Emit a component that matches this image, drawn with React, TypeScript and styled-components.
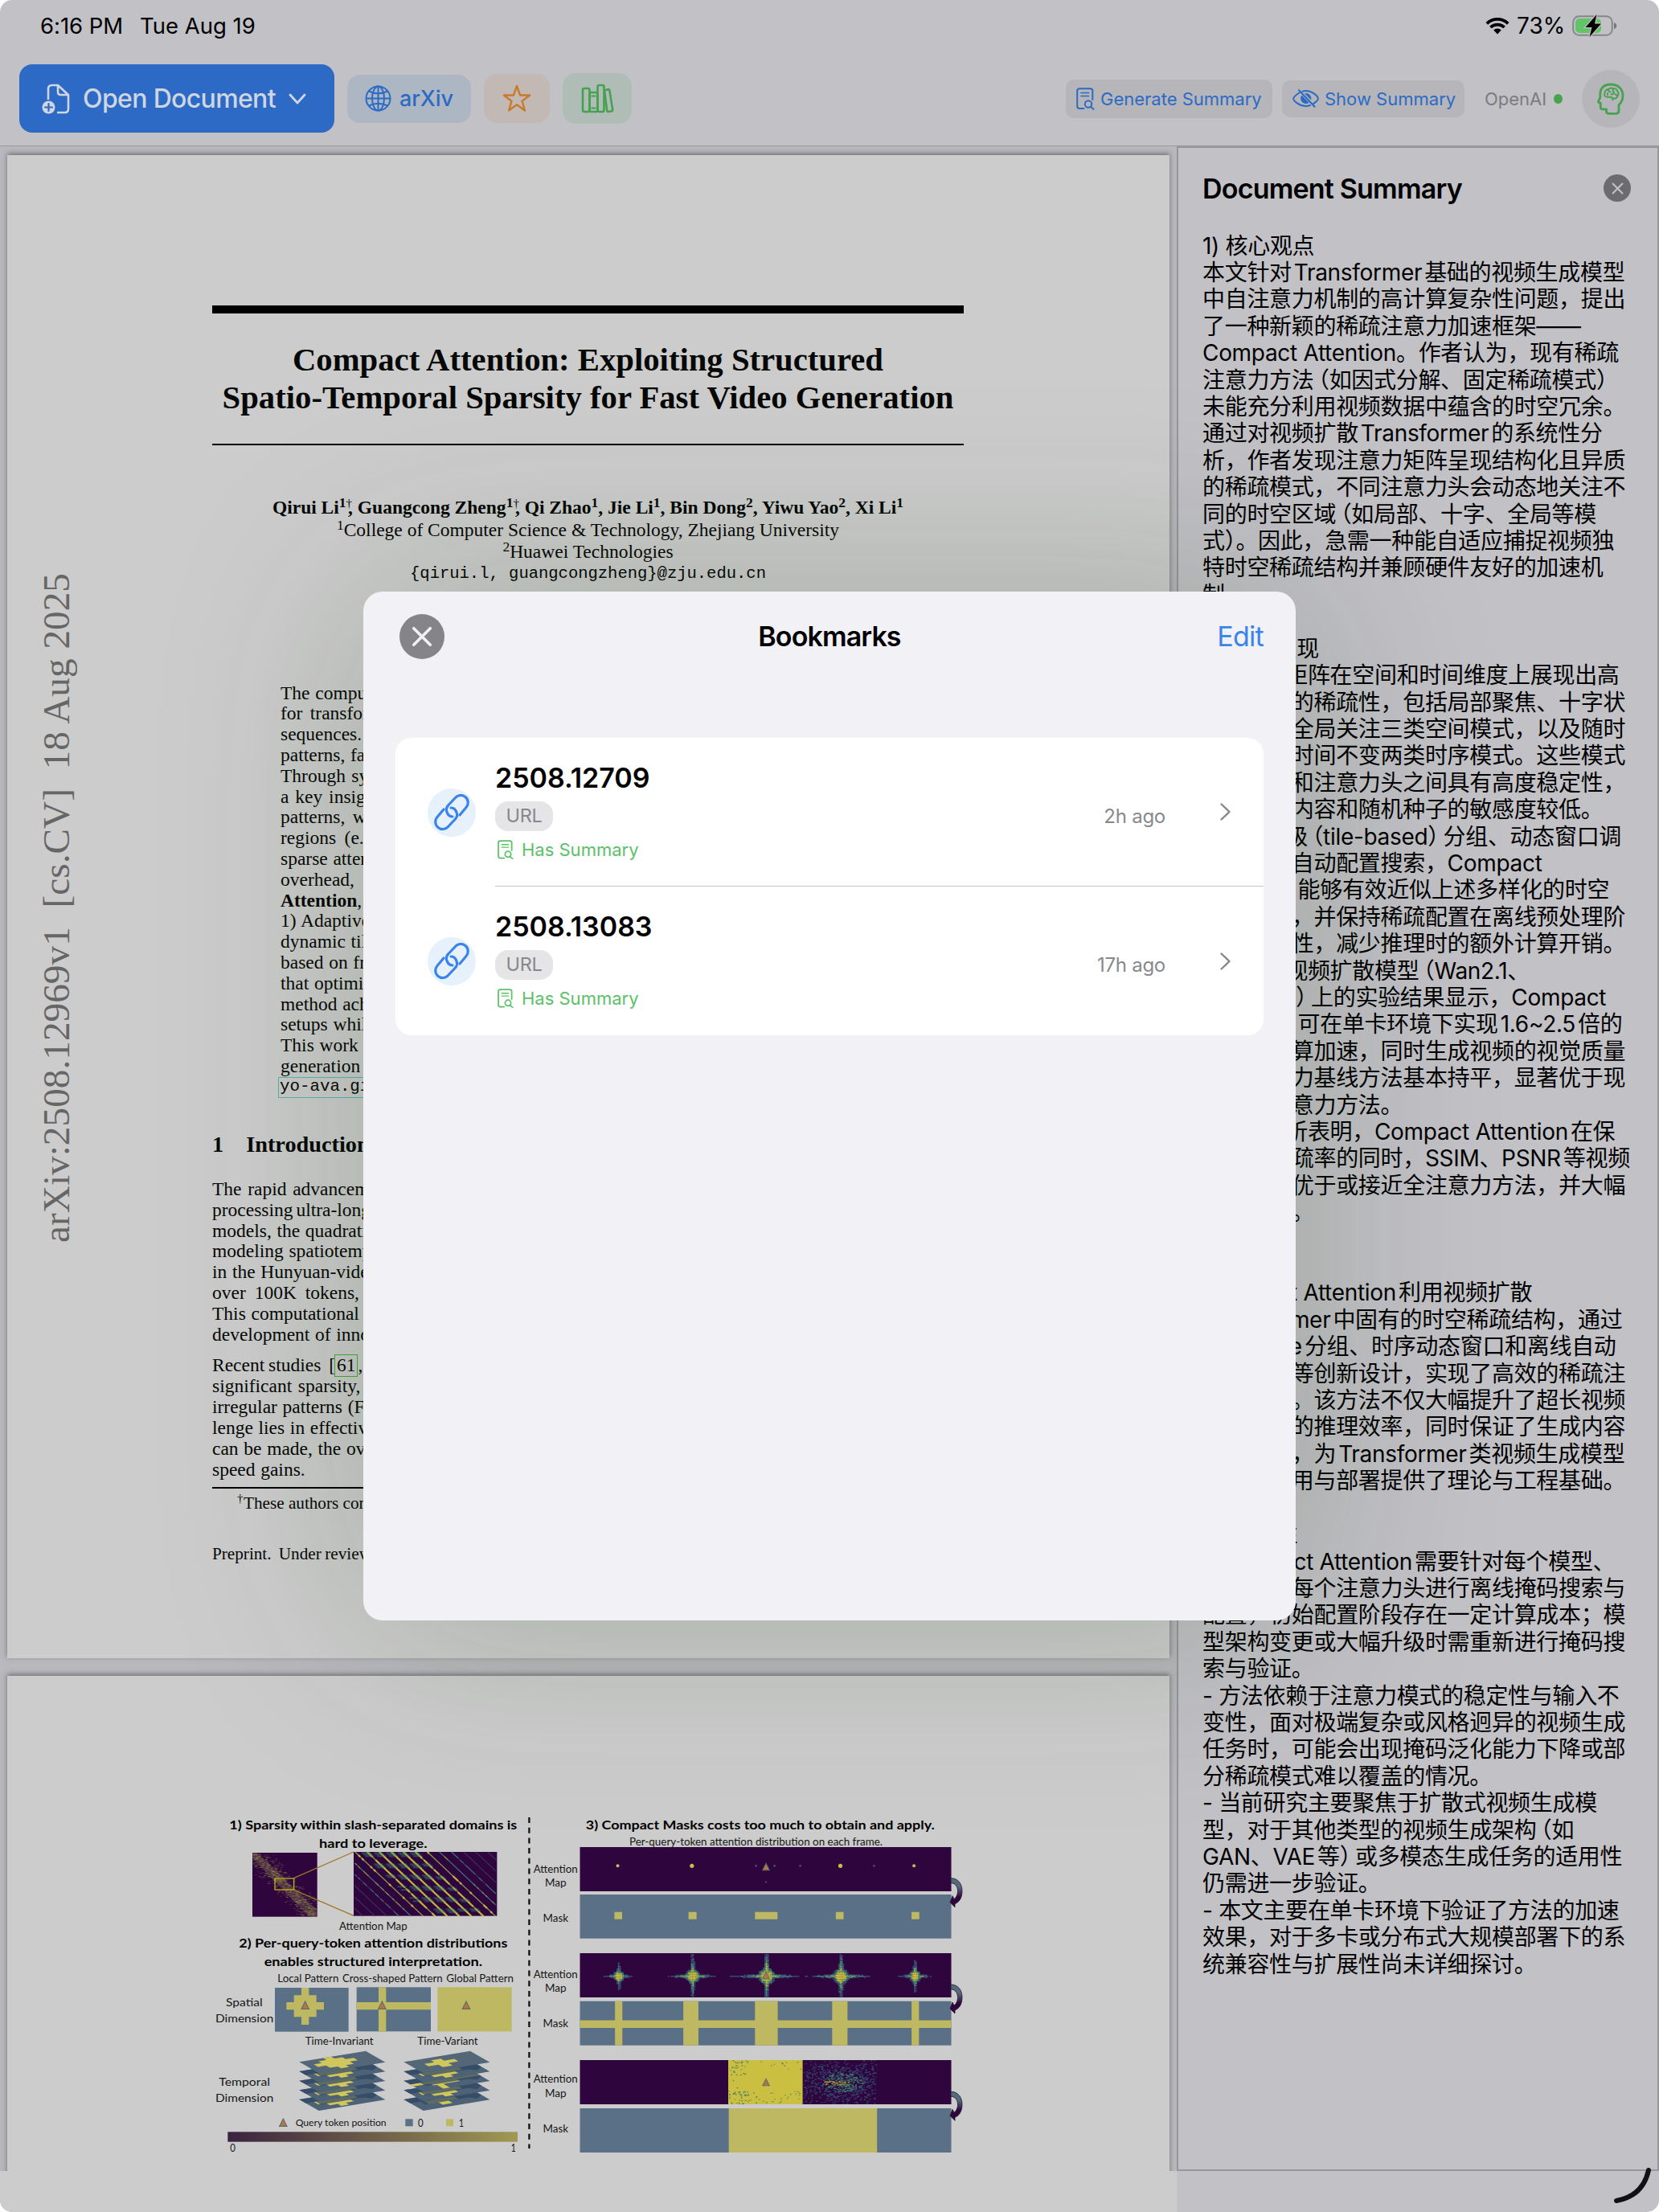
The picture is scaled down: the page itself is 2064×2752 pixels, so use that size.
import React from "react";
import styled, { createGlobalStyle } from "styled-components";

const sans = `Inter, "Noto Sans CJK SC", sans-serif`;
const serif = `"Liberation Serif", serif`;
const mono = `"Liberation Mono", monospace`;

const Global = createGlobalStyle`
  html, body { margin: 0; padding: 0; background: #fff; }
  * { box-sizing: border-box; }
`;

const Screen = styled.div`
  position: relative;
  width: 2064px;
  height: 2752px;
  display: flex;
  flex-direction: column;
  overflow: hidden;
  border-radius: 15px;
  background: #c2c1c6;
  font-family: ${sans};
  color: #000;
`;

/* ---------- status bar ---------- */

const StatusBar = styled.div`
  display: flex;
  align-items: center;
  height: 64px;
  padding: 0 52px 0 50px;
  font-size: 27.5px;
  line-height: 34px;
  white-space: pre;
`;
const StatusTime = styled.span<{ $w: number; $ls: number }>`
  width: ${(p) => p.$w}px;
  letter-spacing: ${(p) => p.$ls}px;
`;
const Spacer = styled.div`
  flex: 1;
`;
const Percent = styled.span`
  width: 78px;
  padding-left: 9px;
  font-size: 28px;
`;

/* ---------- toolbar ---------- */

const Toolbar = styled.div`
  display: flex;
  align-items: center;
  height: 118px;
  padding: 0 24px;
  border-bottom: 1px solid #98979c;
`;
const ToolGroup = styled.div<{ $gap: number }>`
  display: flex;
  align-items: center;
  gap: ${(p) => p.$gap}px;
`;
const PrimaryButton = styled.button`
  display: flex;
  align-items: center;
  width: 392px;
  height: 85px;
  padding: 0 0 0 28px;
  border: 0;
  border-radius: 16px;
  background: #2d6ac6;
  color: #cfd6e2;
  font: 500 32px/40px ${sans};
  letter-spacing: -0.65px;
  white-space: nowrap;
`;
const PrimaryLabel = styled.span`
  width: 271px;
  padding-left: 16px;
  text-align: left;
`;
const TintButton = styled.button<{ $w: number; $h: number; $bg: string }>`
  display: flex;
  align-items: center;
  justify-content: center;
  gap: 10px;
  width: ${(p) => p.$w}px;
  height: ${(p) => p.$h}px;
  padding: 0;
  border: 0;
  border-radius: 16px;
  background: ${(p) => p.$bg};
  color: #2c6bc5;
  font: 500 27px/34px ${sans};
`;
const SmallButton = styled.button<{ $w: number; $h: number }>`
  display: flex;
  align-items: center;
  gap: 7px;
  width: ${(p) => p.$w}px;
  height: ${(p) => p.$h}px;
  padding: 0 0 0 13px;
  border: 0;
  border-radius: 10px;
  background: #b5b5ba;
  color: #2c6bc5;
  font: 400 22px/28px ${sans};
  white-space: nowrap;
`;
const Provider = styled.div`
  display: flex;
  align-items: center;
  gap: 9px;
  width: 97px;
  margin-left: 13px;
  color: #7c7b80;
  font-size: 22px;
  line-height: 28px;
`;
const Dot = styled.i`
  width: 12px;
  height: 12px;
  border-radius: 50%;
  background: #48a24f;
`;
const Avatar = styled.div`
  display: flex;
  align-items: center;
  justify-content: center;
  width: 72px;
  height: 72px;
  margin-left: 12px;
  border-radius: 50%;
  background: #b5b5ba;
`;

/* ---------- body ---------- */

const Body = styled.div`
  display: flex;
  height: 2519px;
`;
const Viewer = styled.div`
  display: flex;
  flex-direction: column;
  gap: 22px;
  width: 1464px;
  padding: 11px 9px 0;
  overflow: hidden;
  background: #b9b8bd;
`;
const Page = styled.div`
  position: relative;
  flex: none;
  width: 1446px;
  height: 1870px;
  background: #ccc;
  box-shadow: 0 -2px 6px rgba(40, 40, 48, 0.5);
  font-family: ${serif};
`;
const Footer = styled.div`
  display: flex;
  flex: 1;
`;
const FooterLeft = styled.div`
  width: 1464px;
  background: #ccc;
`;

/* ---------- paper ---------- */

const Paper = styled.div`
  display: flex;
  flex-direction: column;
  width: 935px;
  margin-left: 255px;
  padding-top: 187px;
  color: #060806;
  white-space: pre;
`;
const Rule = styled.div<{ $h: number; $mt: number }>`
  height: ${(p) => p.$h}px;
  margin-top: ${(p) => p.$mt}px;
  background: #000;
`;
const PaperTitle = styled.div`
  margin-top: 33.5px;
  font-size: 40.7px;
  font-weight: 700;
  line-height: 47px;
  text-align: center;
`;
const AuthorBlock = styled.div`
  margin-top: 64.3px;
  font-size: 23.5px;
  line-height: 27.3px;
  text-align: center;
`;
const AuthorLine = styled.div<{ $bold?: boolean }>`
  height: 27.3px;
  font-weight: ${(p) => (p.$bold ? 700 : 400)};
`;
const Email = styled.div`
  height: 26.1px;
  font: 20.5px/28px ${mono};
`;
const Sup = styled.span`
  position: relative;
  top: -8px;
  font-size: 17.5px;
  line-height: 0;
`;
const Dagger = styled.span<{ $flush?: boolean }>`
  position: relative;
  top: -8px;
  margin-right: ${(p) => (p.$flush ? 0.5 : -5)}px;
  font-size: 15px;
  font-weight: 400;
  line-height: 0;
`;
const Paragraph = styled.div<{ $mt: number; $indent?: number; $lh?: number }>`
  margin-top: ${(p) => p.$mt}px;
  padding-left: ${(p) => p.$indent || 0}px;
  font-size: 23.5px;
  line-height: ${(p) => p.$lh || 25.85}px;
`;
const Line = styled.div<{ $ws?: number }>`
  height: 1lh;
  word-spacing: ${(p) => p.$ws ?? 0.8}px;
`;
const Url = styled.span`
  display: inline-block;
  height: 26px;
  margin: 0 0 0 -3px;
  padding: 0 1px;
  border: 1px solid #58b4ae;
  font: 20.8px/22px ${mono};
  vertical-align: top;
`;
const Cite = styled.span`
  display: inline-block;
  height: 28px;
  margin: -1px 0 0 -1px;
  padding: 0 2px;
  border: 1.5px solid #45ad35;
  line-height: 25px;
  vertical-align: top;
`;
const Heading = styled.div`
  display: flex;
  gap: 28px;
  margin-top: 41.7px;
  font-size: 28.3px;
  font-weight: 700;
  line-height: 34px;
`;
const Small = styled.div<{ $mt: number; $indent?: number; $ws?: number }>`
  margin-top: ${(p) => p.$mt}px;
  padding-left: ${(p) => p.$indent || 0}px;
  font-size: 21.2px;
  line-height: 24px;
  word-spacing: ${(p) => p.$ws || 0}px;
`;
const Stamp = styled.div`
  position: absolute;
  left: 32px;
  top: 520px;
  height: 833px;
  width: 58px;
  color: #666;
  font-size: 47.2px;
  letter-spacing: 0.05px;
  line-height: 58px;
  writing-mode: vertical-rl;
  transform: rotate(180deg);
  white-space: pre;
`;
const FigureSvg = styled.svg`
  display: block;
  margin-left: 231px;
`;
const FigureWrap = styled.div`
  padding-top: 145px;
`;

/* ---------- summary ---------- */

const Panel = styled.div`
  width: 600px;
  padding: 33px 0 0 30px;
  border: 2px solid #97969b;
  background: #c2c1c6;
`;
const PanelHead = styled.div`
  display: flex;
  align-items: center;
  justify-content: space-between;
  height: 34px;
  padding-right: 33px;
  font-size: 34px;
  font-weight: 600;
  letter-spacing: -0.8px;
`;
const CloseDot = styled.div<{ $d: number; $bg: string; $ml?: number }>`
  display: flex;
  align-items: center;
  justify-content: center;
  width: ${(p) => p.$d}px;
  height: ${(p) => p.$d}px;
  margin-left: ${(p) => p.$ml || 0}px;
  border-radius: 50%;
  background: ${(p) => p.$bg};
`;
const SummaryText = styled.div`
  margin-top: 38.6px;
  font-size: 28px;
  letter-spacing: -0.31px;
  line-height: 33.42px;
  white-space: pre;
  text-spacing-trim: space-all;
`;
const SummaryLine = styled.div`
  height: 33.42px;
`;
const Gap = styled.span`
  padding-left: 3px;
`;
const Paren = styled.span<{ $l?: number; $r?: number }>`
  padding-left: ${(p) => p.$l || 0}px;
  padding-right: ${(p) => p.$r || 0}px;
  font-family: "Noto Sans CJK SC", sans-serif;
  font-feature-settings: "halt";
  line-height: 0;
`;

/* ---------- modal ---------- */

const Modal = styled.div`
  position: absolute;
  left: 452px;
  top: 736px;
  width: 1160px;
  height: 1280px;
  padding: 28px 40px 0;
  border-radius: 24px;
  background: #f1f1f6;
  box-shadow: 0 0 270px rgba(20, 50, 10, 0.21);
`;
const ModalHead = styled.div`
  display: grid;
  grid-template-columns: 1fr auto 1fr;
  align-items: center;
  height: 56px;
`;
const ModalTitle = styled.div`
  padding-bottom: 2px;
  font-size: 34px;
  font-weight: 600;
  letter-spacing: -0.9px;
`;
const EditLink = styled.div`
  justify-self: end;
  padding-bottom: 2px;
  color: #3b83ec;
  font-size: 34px;
  letter-spacing: -0.7px;
`;
const Card = styled.div`
  margin-top: 98px;
  border-radius: 20px;
  background: #fff;
`;
const Row = styled.div`
  display: flex;
  align-items: center;
  height: 185px;
  padding-left: 40px;
`;
const LinkBadge = styled.div`
  display: flex;
  align-items: center;
  justify-content: center;
  width: 60px;
  height: 60px;
  border-radius: 50%;
  background: #e6f1fc;
`;
const RowMain = styled.div<{ $line: boolean }>`
  display: flex;
  flex: 1;
  align-items: center;
  height: 185px;
  margin-left: 24px;
  border-bottom: ${(p) => (p.$line ? "1px solid #c4c4c7" : "0")};
`;
const RowInfo = styled.div`
  flex: 1;
  padding-bottom: 1.5px;
`;
const RowTitle = styled.div`
  height: 40px;
  font-size: 34px;
  font-weight: 600;
  line-height: 40px;
  letter-spacing: -0.02px;
`;
const Pill = styled.div`
  width: 72px;
  height: 37px;
  margin-top: 9px;
  border-radius: 16px;
  background: #e5e5e8;
  color: #88888c;
  font-size: 23.5px;
  line-height: 36px;
  text-align: center;
  letter-spacing: -0.3px;
`;
const HasSummary = styled.div`
  display: flex;
  align-items: center;
  gap: 10px;
  height: 28px;
  margin-top: 9px;
  padding-left: 3px;
  color: #5cc168;
  font-size: 22px;
`;
const Ago = styled.div`
  width: 120px;
  margin-right: 68px;
  padding-top: 10px;
  color: #88888c;
  font-size: 24px;
  text-align: right;
  letter-spacing: -0.25px;
`;
const RowChevron = styled.svg`
  margin-right: 41px;
`;
const Corner = styled.svg`
  position: absolute;
  right: 6px;
  bottom: 6px;
`;

/* ---------- icons ---------- */

const DocPlus = () => (
  <svg width="35" height="38" viewBox="0 0 35 38" fill="none" stroke="#cfd6e2" strokeWidth="2.6" strokeLinejoin="round">
    <path d="M8 20V6.500Q8 2 12.500 2H20L33 14V31.500Q33 36 28.500 36H19M20 2V10.500Q20 14 23.500 14H33" />
    <circle cx="8.500" cy="29.500" r="8" fill="#cfd6e2" stroke="none" />
    <path d="M8.500 25v9M4 29.500h9" stroke="#2d6ac6" strokeWidth="2.200" strokeLinecap="round" />
  </svg>
);
const ChevronDown = () => (
  <svg width="24" height="16" viewBox="0 0 24 16" fill="none" stroke="#cfd6e2" strokeWidth="2.8" strokeLinecap="round" strokeLinejoin="round">
    <path d="M3 3l9 10 9-10" />
  </svg>
);
const Globe = () => (
  <svg width="33" height="33" viewBox="0 0 33 33" fill="none" stroke="#2c6bc5" strokeWidth="2">
    <circle cx="16.500" cy="16.500" r="15" />
    <ellipse cx="16.500" cy="16.500" rx="7.500" ry="15" />
    <path d="M16.500 1.500v30M1.500 16.500h30M5 7.500q11.500 5.500 23 0M5 25.500q11.500-5.500 23 0" />
  </svg>
);
const Star = () => (
  <svg width="36" height="35" viewBox="0 0 36 35" fill="none" stroke="#c87b2c" strokeWidth="2.4" strokeLinejoin="round">
    <path d="M18 2l4.100 11.500h12L24.500 20.700 28 32.500 18 25.300 8 32.500l3.500-11.800L1.900 13.500h12z" />
  </svg>
);
const Books = () => (
  <svg width="41" height="37" viewBox="0 0 41 37" fill="none" stroke="#47a150" strokeWidth="2.600" strokeLinejoin="round">
    <rect x="2" y="6" width="8.500" height="29" rx="2" />
    <rect x="10.500" y="11" width="10" height="24" rx="2" />
    <rect x="20.500" y="2" width="8" height="33" rx="2" />
    <path d="M29 8.500l4.500-1.300q1.500-.3 1.800 1.200l3.900 24q.2 1.500-1.200 1.900l-4 .7q-1.500.2-1.800-1.300z" />
    <path d="M12.500 15.500h6M12.500 30.500h6" strokeWidth="2" />
  </svg>
);
const DocSearch = ({ w, color }: { w: number; color: string }) => (
  <svg width={w} height={(w * 28) / 23} viewBox="0 0 23 28" fill="none" stroke={color} strokeWidth="2" strokeLinecap="round" strokeLinejoin="round">
    <path d="M9.500 26H4Q1.200 26 1.200 23V4Q1.200 1.200 4 1.200H17.500Q20.300 1.200 20.300 4V15" />
    <path d="M6 6.500h9.500M6 10.500h9.500" strokeWidth="1.700" />
    <circle cx="15" cy="20.500" r="4.200" />
    <path d="M18 23.800l3.500 3" />
  </svg>
);
const EyeSlash = () => (
  <svg width="33" height="23" viewBox="0 0 33 23" fill="none" stroke="#2c6bc5" strokeWidth="2" strokeLinecap="round">
    <path d="M8.500 4.500C4.500 7 1.200 10 1.200 11.700 1.200 14.500 8.500 21 16.500 21q3 0 5.500-1M12.500 2.700Q14.500 2 16.500 2c8 0 15.300 6.500 15.300 9.700 0 1.500-2.600 4.300-6.300 6.600" />
    <path d="M11.500 7.500a6.500 6.500 0 0 0 9 9.200zM15 5.300a6.500 6.500 0 0 1 8 8.200z" fill="#2c6bc5" stroke="none" />
    <path d="M8 1.200l19.500 20.600" />
  </svg>
);
const Brain = () => (
  <svg width="34" height="40" viewBox="0 0 34 40" fill="none" stroke="#47a150" strokeWidth="2.800" strokeLinejoin="round" strokeLinecap="round">
    <path d="M16.500 2C8.500 2 3.800 7 3.800 14v4.500L1.600 23q-.4 1.400 1 1.800l1.700.5v5q0 2.500 2.500 2.500h4.700v2.500q0 3 3.500 3h8.500q3.500 0 3.500-3.500V27.500Q32 23 32 16C32 7.500 26 2 16.500 2z" />
    <path d="M9.500 12.500q-1.500 5 3.500 5.200h3.500q3 .3 3 3.500M9.500 12.500q.5-4 4.500-4.500 2.500-2.500 6-.8 4-.5 5.200 3 2.500 3 .5 6-1 3.500-4.800 3.300M14 8q-.3 3 2.500 3.500M20 7.200q-1 3 1 4.300-.5 3-3.500 3M25.500 16q-2-.5-3-2M13 13v2" strokeWidth="1.900" />
  </svg>
);
const Wifi = () => (
  <svg width="30" height="22" viewBox="0 0 30 22" fill="none" stroke="#000" strokeWidth="3.800">
    <path d="M1.800 8.300a19 19 0 0 1 26.400 0M6.400 13a12.400 12.400 0 0 1 17.200 0" />
    <path d="M15 21.500l-4.800-5a6.800 6.800 0 0 1 9.600 0z" fill="#000" stroke="none" />
  </svg>
);
const Battery = () => (
  <svg width="56" height="28" viewBox="0 0 56 28">
    <rect x="1.200" y="2.200" width="48.600" height="23.600" rx="7.500" fill="none" stroke="#87868b" strokeWidth="2" />
    <path d="M52 10q3.200 1 3.200 4T52 18z" fill="#77767b" />
    <rect x="4" y="5" width="32" height="18" rx="5" fill="#62c466" />
    <path d="M30.500 0L16.500 16h8l-3 12L36 11.500h-8z" fill="#000" stroke="#c2c1c6" strokeWidth="2.400" paintOrder="stroke" />
  </svg>
);
const Cross = ({ s, w, color }: { s: number; w: number; color: string }) => (
  <svg width={s} height={s} viewBox="0 0 24 24" fill="none" stroke={color} strokeWidth={w} strokeLinecap="round">
    <path d="M2.500 2.500l19 19M21.500 2.500l-19 19" />
  </svg>
);
const LinkIcon = () => (
  <svg width="46" height="47" viewBox="0 0 46 47" fill="none" stroke="#3b83ec" strokeWidth="3.200" strokeLinecap="round">
    <path d="M17.500 24.500Q14.500 19 19 14.500L27.500 5.500a9 9 0 0 1 13.500 12L33 27" />
    <path d="M17.500 24.500q2 4.500 6.500 4.500" />
    <path d="M28.500 22.500Q31.500 28 27 32.500L18.500 41.500a9 9 0 0 1-13.500-12L13 20" />
    <path d="M28.500 22.500q-2-4.500-6.500-4.500" />
  </svg>
);

/* ---------- figure ---------- */

const BLUE = "#5a7086";
const YELLOW = "#bdb861";
const PURPLE = "#2f053d";
const figFont = `Lato, sans-serif`;

const makeRandom = (seed: number) => () => {
  seed = (seed * 16807) % 2147483647;
  return seed / 2147483647;
};

type LabelProps = { x: number; y: number; w: number; size: number; bold?: boolean; children: string };
const Label = ({ x, y, w, size, bold, children }: LabelProps) => (
  <text x={x} y={y} textLength={w} lengthAdjust="spacingAndGlyphs" fontSize={size} fontWeight={bold ? 700 : 400} fontFamily={figFont} fill={bold ? "#000" : "#161616"}>
    {children}
  </text>
);
const Tri = ({ x, y, s = 1 }: { x: number; y: number; s?: number }) => (
  <path transform={`translate(${x} ${y}) scale(${s})`} d="M0 -14L14 14H-14Z" fill="#b9763a" stroke="#5b6b78" strokeWidth="3.500" />
);

const DiagonalField = () => {
  const rnd = makeRandom(77);
  const items: React.ReactElement[] = [];
  for (let k = -6; k < 13; k++) {
    const start = 605 + k * 45;
    for (let t = 0; t < 236; t += 6) {
      const x = start + t * 1.06;
      const y = 222 + t;
      if (x < 600 || x > 1128) continue;
      const ridge = 740 + t * 1.05;
      const v = Math.exp(-Math.pow((x - ridge) / 165, 2)) * (0.6 + rnd() * 0.6);
      const color = v > 0.55 ? "#c9c53c" : v > 0.3 ? "#8aa150" : v > 0.12 ? "#3f7478" : "#3a4a70";
      items.push(<path key={`${k}-${t}`} d={`M${x} ${y}l6.800 6.300`} stroke={color} strokeWidth={v > 0.55 ? 6.500 : 4} opacity={v > 0.12 ? 0.95 : 0.6} />);
      if (v > 0.6 && t % 42 < 14) {
        items.push(<path key={`g${k}-${t}`} d={`M${x - 20} ${y + 4}h34`} stroke="#3d8a7a" strokeWidth="6" opacity="0.45" />);
      }
    }
  }
  return <g>{items}</g>;
};

const DiagonalBand = () => {
  const rnd = makeRandom(5);
  const items: React.ReactElement[] = [];
  for (let i = 0; i < 620; i++) {
    const t = rnd() * 238;
    const off = (rnd() + rnd() + rnd() - 1.5) * 44;
    const x = 222 + t + off * 0.6;
    const y = 225 + t - off * 0.6;
    if (x < 222 || x > 456 || y < 225 || y > 461) continue;
    items.push(<rect key={i} x={x} y={y} width="8" height="2.500" fill="#97904f" opacity={0.25 + rnd() * 0.3} />);
  }
  return (
    <g>
      <path d="M222 225h16L464 440v24h-30L222 245z" fill="#7a6a50" opacity="0.4" />
      {items}
    </g>
  );
};

const Blob = ({ kind }: { kind: "local" | "small" | "cross" }) => {
  if (kind === "cross") return <path d="M0 2h10v1H0zM3 0h1v6H3zM2.500 1.500h4v2.500h-4z" fill="#cfc65c" />;
  if (kind === "small") return <path d="M3.500 1.200h1.500v1h1.500v1.300H5v1.300H3.500V3.500H2V2.200h1.500z" fill="#cfc65c" />;
  return <path d="M3.600 0h1.200v1h1.200v1h1.200v1.300H6v1.200H4.800v1H3.600v-1H2.400V3.300H1.200V2h1.200V1h1.200z" fill="#cfc65c" />;
};

const Stack = ({ x, kinds }: { x: number; kinds: ("local" | "small" | "cross")[] }) => (
  <g>
    {[4, 3, 2, 1, 0].map((i) => (
      <g key={i} transform={`matrix(24.8 -4.1 12.200 7 ${x} ${1006 + i * 35})`}>
        <rect width="10" height="6" fill={i === 0 ? "#546779" : "#4d6277"} />
        <Blob kind={kinds[i]} />
        {i > 0 && <path d="M0 0H10V3.400L8.800 4.600L8 3.600H1.500V2H0z" fill="#2c4563" opacity="0.7" />}
      </g>
    ))}
  </g>
);

const FigureLeft = () => (
  <g transform="scale(0.33333)">
    <Label x={136} y={137} w={1074} size={46} bold>1) Sparsity within slash-separated domains is</Label>
    <Label x={471} y={206} w={404} size={46} bold>hard to leverage.</Label>
    <rect x="222" y="225" width="242" height="239" fill={PURPLE} />
    <DiagonalBand />
    <rect x="600" y="222" width="535" height="239" fill={PURPLE} />
    <DiagonalField />
    <path d="M378 319L600 222M378 364L600 460" stroke="#9c7a28" strokeWidth="4" />
    <rect x="306" y="321" width="71" height="42" fill="none" stroke="#c0ae1c" strokeWidth="4" />
    <Label x={546} y={513} w={254} size={38}>Attention Map</Label>
    <Label x={172} y={578} w={1002} size={46} bold>2) Per-query-token attention distributions</Label>
    <Label x={266} y={647} w={814} size={46} bold>enables structured interpretation.</Label>
    <Label x={316} y={708} w={228} size={38}>Local Pattern</Label>
    <Label x={558} y={708} w={374} size={38}>Cross-shaped Pattern</Label>
    <Label x={946} y={708} w={251} size={38}>Global Pattern</Label>
    <rect x="306" y="729" width="275" height="164" fill={BLUE} />
    <path d="M405 729h28v28h28v26h28v28h-28v27h-28v29h-28v-29h-28v-27h-28v-28h28v-26h28z" fill={YELLOW} />
    <rect x="611" y="727" width="277" height="165" fill={BLUE} />
    <path d="M693 727h28v165h-28zM611 783h277v28H611z" fill={YELLOW} />
    <rect x="913" y="727" width="277" height="165" fill={YELLOW} />
    <Tri x={419} y={794} />
    <Tri x={706} y={794} />
    <Tri x={1020} y={794} />
    <Label x={123} y={797} w={137} size={42}>Spatial</Label>
    <Label x={84} y={857} w={217} size={42}>Dimension</Label>
    <Label x={419} y={942} w={255} size={38}>Time-Invariant</Label>
    <Label x={838} y={942} w={226} size={38}>Time-Variant</Label>
    <Stack x={397} kinds={["local", "local", "local", "local", "local"]} />
    <Stack x={787} kinds={["small", "local", "cross", "local", "small"]} />
    <Label x={97} y={1095} w={191} size={42}>Temporal</Label>
    <Label x={84} y={1155} w={217} size={42}>Dimension</Label>
    <Tri x={337} y={1232} />
    <Label x={383} y={1245} w={339} size={37}>Query token position</Label>
    <rect x="793" y="1219" width="28" height="27" fill={BLUE} />
    <Label x={840} y={1248} w={20} size={38}>0</Label>
    <rect x="945" y="1219" width="27" height="27" fill={YELLOW} />
    <Label x={993} y={1248} w={18} size={38}>1</Label>
    <rect x="130" y="1267" width="1082" height="37" fill="url(#bar)" />
    <Label x={139} y={1341} w={20} size={38}>0</Label>
    <Label x={1187} y={1341} w={18} size={38}>1</Label>
  </g>
);

const Flare = ({ x, hw, vh, core, seed }: { x: number; hw: number; vh: number; core: number; seed: number }) => {
  const rnd = makeRandom(seed);
  const cells: React.ReactElement[] = [];
  for (let dx = -hw; dx <= hw; dx += 1.8) {
    for (let dy = -27; dy <= 25.5; dy += 1.5) {
      const arm = Math.exp(-Math.abs(dx) / (hw * 0.5)) * Math.exp(-Math.pow(dy / 1.9, 2));
      const pole = Math.exp(-Math.abs(dy) / (vh * 0.65)) * Math.exp(-Math.pow(dx / 2.6, 2));
      const hub = 1.3 * Math.exp(-(dx * dx + dy * dy) / (core * core * 0.55));
      const v = Math.max(arm, pole, hub) * (0.7 + rnd() * 0.6);
      if (v < 0.16) continue;
      const fill = v > 0.68 ? "#cdc23c" : v > 0.48 ? "#8fb04a" : v > 0.3 ? "#3d8a7a" : "#3a4a74";
      cells.push(<rect key={`${dx}_${dy}`} x={dx} y={dy} width="1.900" height="1.600" fill={fill} />);
    }
  }
  return <g transform={`translate(${x} 28)`}>{cells}</g>;
};

const Noise = () => {
  const rnd = makeRandom(31);
  const cells: React.ReactElement[] = [];
  for (let i = 0; i < 2600; i++) {
    const x = 277 + rnd() * 91;
    const y = rnd() * 54;
    const d = Math.exp(-Math.pow((x - 326) / 36, 2) - Math.pow((y - 27) / 17, 2));
    if (rnd() > d * 0.75 + 0.06) continue;
    const mid = Math.abs(y - 28) < 2.5 && Math.abs(x - 318) < 16;
    cells.push(<rect key={i} x={x} y={y} width="2" height="1.200" fill={mid ? "#a5b548" : d > 0.6 ? "#3d8478" : "#34567a"} opacity={0.7} />);
  }
  for (let i = 0; i < 1100; i++) {
    const x = 184.5 + rnd() * 91;
    const y = rnd() * 54;
    const left = x < 210 ? 0.5 : 0.13;
    const edge = y < 3 || y > 38 ? left : y < 20 && x < 206 ? 0.28 : 0.015;
    if (rnd() > edge) continue;
    cells.push(<rect key={`y${i}`} x={x} y={y} width="1.700" height="1.300" fill={rnd() > 0.5 ? "#5f8c54" : "#356a70"} opacity={0.75} />);
  }
  return <g>{cells}</g>;
};

const Arrow = ({ y }: { y: number }) => (
  <path transform={`translate(1183 ${y})`} d="M0 0C9 0 14 7 14 16C14 25 10 30 5 32L5 36L-1 30L2 22L4 26C11 21 10 6 0 6Z" fill="url(#arrow)" stroke="#1c1c26" strokeWidth="0.800" />
);

const StripLabels = ({ a, m, k }: { a: number; m: number; k: number }) => (
  <g>
    <Label x={663.7} y={a} w={55} size={13.5}>Attention</Label>
    <Label x={678} y={m} w={26.5} size={13.5}>Map</Label>
    <Label x={675.6} y={k} w={31.4} size={13.5}>Mask</Label>
  </g>
);

const FigureRight = () => (
  <g transform="translate(-240 -2230)">
    <path d="M658.400 2261V2673" stroke="#111" strokeWidth="2.300" strokeDasharray="7 5.700" />
    <Label x={728.8} y={2275.5} w={434} size={15.3} bold>3) Compact Masks costs too much to obtain and apply.</Label>
    <Label x={783} y={2295.5} w={315} size={12.6}>Per-query-token attention distribution on each frame.</Label>
    <StripLabels a={2329.5} m={2346.5} k={2390.7} />
    <StripLabels a={2460.5} m={2477.5} k={2521.7} />
    <StripLabels a={2590.7} m={2608.7} k={2652.7} />
    <g transform="translate(721.500 2298)">
      <rect width="462" height="55" fill={PURPLE} />
      {[47, 139.3, 324, 415.6].map((x, i) => (
        <circle key={x} cx={x} cy="23.300" r={i === 1 || i === 2 ? 2.6 : 2} fill="#c8bf45" />
      ))}
      {[219, 242, 274, 366].map((x) => (
        <circle key={x} cx={x} cy="23.300" r="1.500" fill="#3b4a70" />
      ))}
      <circle cx="231.500" cy="43.500" r="1.200" fill="#3b4a70" />
      <Tri x={231.5} y={24.5} s={0.3} />
    </g>
    <g transform="translate(721.500 2357)">
      <rect width="462" height="54.700" fill={BLUE} />
      <path d="M42.900 21.700h9.600v9h-9.600zM135.100 21.700h10v9h-10zM217.800 21.700h28v9h-28zM318.400 21.700h9.600v9h-9.600zM412.600 21.700h9.600v9h-9.600z" fill={YELLOW} />
    </g>
    <g transform="translate(721.500 2430)">
      <rect width="462" height="55" fill={PURPLE} />
      <Flare x={47.5} hw={20} vh={14} core={6.5} seed={11} />
      <Flare x={139.5} hw={32} vh={24} core={8.5} seed={22} />
      <Flare x={231.5} hw={47} vh={34} core={10} seed={33} />
      <Flare x={324} hw={44} vh={28} core={9.5} seed={44} />
      <Flare x={416} hw={22} vh={16} core={7} seed={55} />
      <Tri x={231.5} y={27.5} s={0.3} />
    </g>
    <g transform="translate(721.500 2489.700)">
      <rect width="462" height="55" fill={BLUE} />
      <path d="M43.600 0h9.200v55h-9.200zM128.600 0h18.800v55h-18.800zM217.800 0h28.300v55h-28.300zM313.800 0h19.100v55h-19.100zM412.600 0h9.200v55h-9.200zM0 23.700h462v9.600H0z" fill={YELLOW} />
    </g>
    <g transform="translate(721.500 2563)">
      <rect width="462" height="55" fill={PURPLE} />
      <rect x="184.500" width="92.600" height="55" fill="#cbbf41" />
      <Noise />
      <Tri x={231.5} y={27.5} s={0.3} />
    </g>
    <g transform="translate(721.500 2623)">
      <rect width="462" height="55" fill={BLUE} />
      <rect x="185.200" width="184.500" height="55" fill={YELLOW} />
    </g>
    <Arrow y={2336.7} />
    <Arrow y={2469} />
    <Arrow y={2602.3} />
  </g>
);

const Figure = () => (
  <FigureSvg width="980" height="471" viewBox="0 0 980 471">
    <defs>
      <linearGradient id="bar">
        <stop offset="0" stopColor="#3a2340" />
        <stop offset="1" stopColor="#a09852" />
      </linearGradient>
      <linearGradient id="arrow" x1="0" y1="0" x2="0" y2="1">
        <stop offset="0.300" stopColor="#56697d" />
        <stop offset="0.650" stopColor={PURPLE} />
      </linearGradient>
    </defs>
    <FigureLeft />
    <FigureRight />
  </FigureSvg>
);

/* ---------- content ---------- */

const abstractLines: [string, number?][] = [
  ["The computational dem"],
  ["for transformer-bas", 3.5],
  ["sequences. Existin"],
  ["patterns, fail to ex"],
  ["Through systemat", 1.5],
  ["a key insight: attent", 2],
  ["patterns, where he", 3.5],
  ["regions (e.g., local", 4.5],
  ["sparse attention m"],
  ["overhead, and thus", 9],
];
const abstractTail: string[] = [
  "1) Adaptive tiling",
  "dynamic tile-wise",
  "based on frame di",
  "that optimizes the",
  "method achieves a",
  "setups while main",
  "This work provides",
  "generation throug",
];
const introLines: [string, number?][] = [
  ["The rapid advancement of", 1.8],
  ["processing ultra-long seq", -2],
  ["models, the quadratic cos"],
  ["modeling spatiotemporal"],
  ["in the Hunyuan-video mo"],
  ["over 100K tokens, attent", 5],
  ["This computational bott"],
  ["development of innovati"],
];
const recentLines: [string, number?][] = [
  ["significant sparsity, yet", 1.8],
  ["irregular patterns (Figur"],
  ["lenge lies in effectively"],
  ["can be made, the overhea"],
  ["speed gains."],
];

const summary = `1) 核心观点
本文针对Transformer基础的视频生成模型
中自注意力机制的高计算复杂性问题，提出
了一种新颖的稀疏注意力加速框架——
Compact Attention。作者认为，现有稀疏
注意力方法（如因式分解、固定稀疏模式）
未能充分利用视频数据中蕴含的时空冗余。
通过对视频扩散Transformer的系统性分
析，作者发现注意力矩阵呈现结构化且异质
的稀疏模式，不同注意力头会动态地关注不
同的时空区域（如局部、十字、全局等模
式）。因此，急需一种能自适应捕捉视频独
特时空稀疏结构并兼顾硬件友好的加速机
制。

2) 主要发现
- 注意力矩阵在空间和时间维度上展现出高
度结构化的稀疏性，包括局部聚焦、十字状
分布以及全局关注三类空间模式，以及随时
间变化和时间不变两类时序模式。这些模式
在不同层和注意力头之间具有高度稳定性，
对输入的内容和随机种子的敏感度较低。
- 采用块级（tile-based）分组、动态窗口调
整与离线自动配置搜索，Compact
Attention能够有效近似上述多样化的时空
注意力图，并保持稀疏配置在离线预处理阶
段的稳定性，减少推理时的额外计算开销。
- 在主流视频扩散模型（Wan2.1、
Hunyuan）上的实验结果显示，Compact
Attention可在单卡环境下实现1.6~2.5倍的
注意力计算加速，同时生成视频的视觉质量
与全注意力基线方法基本持平，显著优于现
有稀疏注意力方法。
- 消融分析表明，Compact Attention在保
持较高稀疏率的同时，SSIM、PSNR等视频
质量指标优于或接近全注意力方法，并大幅
提升速度。

3) 结论
Compact Attention利用视频扩散
Transformer中固有的时空稀疏结构，通过
块级的tile分组、时序动态窗口和离线自动
配置搜索等创新设计，实现了高效的稀疏注
意力加速。该方法不仅大幅提升了超长视频
扩散模型的推理效率，同时保证了生成内容
质量稳定，为Transformer类视频生成模型
的实际应用与部署提供了理论与工程基础。

4) 局限性
- Compact Attention需要针对每个模型、
每一层和每个注意力头进行离线掩码搜索与
配置，初始配置阶段存在一定计算成本；模
型架构变更或大幅升级时需重新进行掩码搜
索与验证。
- 方法依赖于注意力模式的稳定性与输入不
变性，面对极端复杂或风格迥异的视频生成
任务时，可能会出现掩码泛化能力下降或部
分稀疏模式难以覆盖的情况。
- 当前研究主要聚焦于扩散式视频生成模
型，对于其他类型的视频生成架构（如
GAN、VAE等）或多模态生成任务的适用性
仍需进一步验证。
- 本文主要在单卡环境下验证了方法的加速
效果，对于多卡或分布式大规模部署下的系
统兼容性与扩展性尚未详细探讨。`.split("\n");

/* Adds the narrow gap between Han and Latin runs and sets parentheses at half width. */
const typeset = (line: string) =>
  line.split(/(（|）(?:。)?|(?<=[\u4e00-\u9fff])(?=[A-Za-z0-9])|(?<=[A-Za-z0-9])(?=[\u4e00-\u9fff]))/).map((part, i) => {
    if (part === "（") return <Paren key={i} $l={5.5}>（</Paren>;
    if (part === "）") return <Paren key={i} $r={5.5}>）</Paren>;
    if (part === "）。")
      return (
        <React.Fragment key={i}>
          <Paren>）</Paren>。
        </React.Fragment>
      );
    if (part === "" && i % 2 === 1) return <Gap key={i} />;
    return <React.Fragment key={i}>{part}</React.Fragment>;
  });

const bookmarks = [
  { id: "2508.12709", ago: "2h ago" },
  { id: "2508.13083", ago: "17h ago" },
];

export default function App() {
  return (
    <>
      <Global />
      <Screen>
        <StatusBar>
          <StatusTime $w={124} $ls={-0.05}>6:16 PM</StatusTime>
          <StatusTime $w={160} $ls={0}>Tue Aug 19</StatusTime>
          <Spacer />
          <Wifi />
          <Percent>73%</Percent>
          <Battery />
        </StatusBar>
        <Toolbar>
          <ToolGroup $gap={16}>
            <PrimaryButton>
              <DocPlus />
              <PrimaryLabel>Open Document</PrimaryLabel>
              <ChevronDown />
            </PrimaryButton>
            <TintButton $w={154} $h={60} $bg="#adb7c4">
              <Globe />
              arXiv
            </TintButton>
            <TintButton $w={82} $h={61} $bg="#c3b9b4">
              <Star />
            </TintButton>
            <TintButton $w={86} $h={63} $bg="#b0bcb6">
              <Books />
            </TintButton>
          </ToolGroup>
          <Spacer />
          <ToolGroup $gap={12}>
            <SmallButton $w={257} $h={48}>
              <DocSearch w={23} color="#2c6bc5" />
              Generate Summary
            </SmallButton>
            <SmallButton $w={227} $h={46}>
              <EyeSlash />
              Show Summary
            </SmallButton>
            <Provider>
              OpenAI
              <Dot />
            </Provider>
            <Avatar>
              <Brain />
            </Avatar>
          </ToolGroup>
        </Toolbar>

        <Body>
          <Viewer>
            <Page>
              <Paper>
                <Rule $h={10} $mt={0} />
                <PaperTitle>
                  <div>Compact Attention: Exploiting Structured</div>
                  <div>Spatio-Temporal Sparsity for Fast Video Generation</div>
                </PaperTitle>
                <Rule $h={2.5} $mt={34} />
                <AuthorBlock>
                  <AuthorLine $bold>
                    Qirui Li<Sup>1</Sup><Dagger>†</Dagger>, Guangcong Zheng<Sup>1</Sup><Dagger>†</Dagger>, Qi Zhao<Sup>1</Sup>, Jie Li<Sup>1</Sup>, Bin Dong<Sup>2</Sup>, Yiwu Yao<Sup>2</Sup>, Xi Li<Sup>1</Sup>
                  </AuthorLine>
                  <AuthorLine><Sup>1</Sup>College of Computer Science &amp; Technology, Zhejiang University</AuthorLine>
                  <AuthorLine><Sup>2</Sup>Huawei Technologies</AuthorLine>
                  <Email>{"{qirui.l, guangcongzheng}@zju.edu.cn"}</Email>
                </AuthorBlock>
                <Paragraph $mt={123.4} $indent={85} $lh={25.8}>
                  {abstractLines.map(([t, ws]) => (
                    <Line key={t} $ws={ws}>{t}</Line>
                  ))}
                  <Line><b>Attention</b>, a hard</Line>
                  {abstractTail.map((t) => (
                    <Line key={t}>{t}</Line>
                  ))}
                  <Line><Url>yo-ava.github.io</Url></Line>
                </Paragraph>
                <Heading>
                  <span>1</span>
                  <span>Introduction</span>
                </Heading>
                <Paragraph $mt={25.6}>
                  {introLines.map(([t, ws]) => (
                    <Line key={t} $ws={ws}>{t}</Line>
                  ))}
                </Paragraph>
                <Paragraph $mt={12.7}>
                  <Line $ws={-1}>Recent studies  [<Cite>61</Cite>, <Cite>58</Cite></Line>
                  {recentLines.map(([t, ws]) => (
                    <Line key={t} $ws={ws}>{t}</Line>
                  ))}
                </Paragraph>
                <Rule $h={1.5} $mt={9} />
                <Small $mt={6.5} $indent={31}><Dagger $flush>†</Dagger>These authors contri</Small>
                <Small $mt={39} $ws={-0.7}>Preprint.  Under review.</Small>
              </Paper>
              <Stamp>arXiv:2508.12969v1  [cs.CV]  18 Aug 2025</Stamp>
            </Page>
            <Page>
              <FigureWrap>
                <Figure />
              </FigureWrap>
            </Page>
          </Viewer>
          <Panel>
            <PanelHead>
              Document Summary
              <CloseDot $d={34} $bg="#6b6b70">
                <Cross s={15} w={3.4} color="#c2c1c6" />
              </CloseDot>
            </PanelHead>
            <SummaryText>
              {summary.map((line, i) => (
                <SummaryLine key={i}>{typeset(line)}</SummaryLine>
              ))}
            </SummaryText>
          </Panel>
        </Body>
        <Footer>
          <FooterLeft />
        </Footer>

        <Modal>
          <ModalHead>
            <CloseDot $d={56} $bg="#858489" $ml={5}>
              <Cross s={26} w={3.3} color="#f1f1f6" />
            </CloseDot>
            <ModalTitle>Bookmarks</ModalTitle>
            <EditLink>Edit</EditLink>
          </ModalHead>
          <Card>
            {bookmarks.map((b, i) => (
              <Row key={b.id}>
                <LinkBadge>
                  <LinkIcon />
                </LinkBadge>
                <RowMain $line={i === 0}>
                  <RowInfo>
                    <RowTitle>{b.id}</RowTitle>
                    <Pill>URL</Pill>
                    <HasSummary>
                      <DocSearch w={20} color="#5cc168" />
                      Has Summary
                    </HasSummary>
                  </RowInfo>
                  <Ago>{b.ago}</Ago>
                  <RowChevron width="13" height="22" viewBox="0 0 13 22" fill="none" stroke="#88888c" strokeWidth="2.400" strokeLinecap="round" strokeLinejoin="round">
                    <path d="M1.500 1.500L11.500 11 1.500 20.500" />
                  </RowChevron>
                </RowMain>
              </Row>
            ))}
          </Card>
        </Modal>
        <Corner width="52" height="52" viewBox="0 0 52 52" fill="none" stroke="#111" strokeWidth="6" strokeLinecap="round">
          <path d="M5 44Q38 38 45 6" />
        </Corner>
      </Screen>
    </>
  );
}
